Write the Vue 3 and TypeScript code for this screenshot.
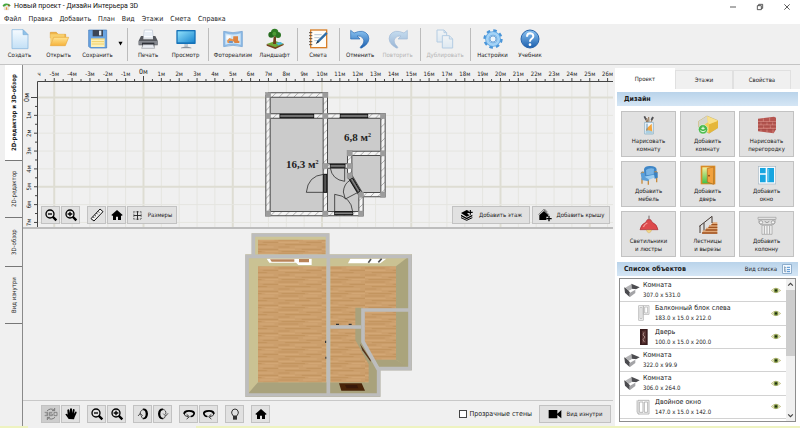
<script setup lang="ts">
import { ref } from 'vue'

interface Tool {
  kind: 'button' | 'separator' | 'arrow'
  label?: string
  icon?: string
  size?: 'small' | 'medium' | 'large'
  disabled?: boolean
}

interface SceneItem {
  name: string
  dims: string
  icon: string
  child?: boolean
}

const menu = ['Файл', 'Правка', 'Добавить', 'План', 'Вид', 'Этажи', 'Смета', 'Справка']

const sep: Tool = { kind: 'separator' }
const tools: Tool[] = [
  { kind: 'button', label: 'Создать', icon: 'new', size: 'medium' },
  { kind: 'button', label: 'Открыть', icon: 'open', size: 'medium' },
  { kind: 'button', label: 'Сохранить', icon: 'save', size: 'medium' },
  { kind: 'arrow' },
  sep,
  { kind: 'button', label: 'Печать', icon: 'print', size: 'small' },
  { kind: 'button', label: 'Просмотр', icon: 'monitor', size: 'medium' },
  sep,
  { kind: 'button', label: 'Фотореализм', icon: 'photo', size: 'large' },
  { kind: 'button', label: 'Ландшафт', icon: 'tree', size: 'medium' },
  sep,
  { kind: 'button', label: 'Смета', icon: 'estimate', size: 'small' },
  sep,
  { kind: 'button', label: 'Отменить', icon: 'undo', size: 'small' },
  { kind: 'button', label: 'Повторить', icon: 'redo', size: 'medium', disabled: true },
  sep,
  { kind: 'button', label: 'Дублировать', icon: 'copy', size: 'large', disabled: true },
  sep,
  { kind: 'button', label: 'Настройки', icon: 'gear', size: 'medium' },
  { kind: 'button', label: 'Учебник', icon: 'help', size: 'small' },
]

const views = [
  { label: '2D-редактор и 3D-обзор', size: 'view-xl' },
  { label: '2D-редактор', size: 'view-l' },
  { label: '3D-обзор', size: 'view-m' },
  { label: 'Вид изнутри', size: 'view-l' },
]
const activeView = ref(0)

const panelTabs = ['Проект', 'Этажи', 'Свойства']
const activePanel = ref(0)

const designActions = [
  { icon: 'draw-room', lines: ['Нарисовать', 'комнату'] },
  { icon: 'add-room', lines: ['Добавить', 'комнату'] },
  { icon: 'bricks', lines: ['Нарисовать', 'перегородку'] },
  { icon: 'chair', lines: ['Добавить', 'мебель'] },
  { icon: 'door', lines: ['Добавить', 'дверь'] },
  { icon: 'window', lines: ['Добавить', 'окно'] },
  { icon: 'lamp', lines: ['Светильники', 'и люстры'] },
  { icon: 'stairs', lines: ['Лестницы', 'и вырезы'] },
  { icon: 'column', lines: ['Добавить', 'колонну'] },
]

const items: SceneItem[] = [
  { name: 'Комната', dims: '307.0 x 531.0', icon: 'room' },
  { name: 'Балконный блок слева', dims: '183.0 x 15.0 x 212.0', icon: 'balcony', child: true },
  { name: 'Дверь', dims: '100.0 x 15.0 x 200.0', icon: 'dark-door', child: true },
  { name: 'Комната', dims: '322.0 x 99.9', icon: 'room' },
  { name: 'Комната', dims: '306.0 x 264.0', icon: 'room' },
  { name: 'Двойное окно', dims: '147.0 x 15.0 x 142.0', icon: 'double-window', child: true },
]

const cameraGroups = [
  [
    { icon: 'rotate360', label: 'Вращение 360' },
    { icon: 'hand', label: 'Переместить' },
  ],
  [
    { icon: 'zoom-out', label: 'Отдалить' },
    { icon: 'zoom-in', label: 'Приблизить' },
  ],
  [
    { icon: 'tilt-up', label: 'Наклон вверх' },
    { icon: 'tilt-down', label: 'Наклон вниз' },
  ],
  [
    { icon: 'turn-left', label: 'Поворот влево' },
    { icon: 'turn-right', label: 'Поворот вправо' },
  ],
  [{ icon: 'bulb', label: 'Освещение' }],
  [{ icon: 'home', label: 'Исходный вид' }],
]

const transparentWalls = ref(false)

/* Ruler geometry: one metre and the position of the zero mark on the canvas. */
const metre = 17.85
const zeroX = 120.5
const zeroY = 32.5
const axisX = 14.5
const axisY = 16.5
const xMarks = Array.from({ length: 32 }, (_, i) => i - 5).map((n) => ({ n, x: zeroX + n * metre }))
const yMarks = Array.from({ length: 8 }, (_, i) => i).map((n) => ({ n, y: zeroY + n * metre }))
</script>

<template>
  <div class="app">
    <svg class="sprite" aria-hidden="true">
      <defs>
        <linearGradient id="gBlue" x1="0" y1="0" x2="0" y2="1">
          <stop offset="0" stop-color="#8cc4f2" /><stop offset="1" stop-color="#1b5fae" />
        </linearGradient>
        <linearGradient id="gScreen" x1="0" y1="0" x2="1" y2="1">
          <stop offset="0" stop-color="#8fe0fb" /><stop offset="1" stop-color="#1b87cf" />
        </linearGradient>
        <linearGradient id="gPaper" x1="0" y1="0" x2="0" y2="1">
          <stop offset="0" stop-color="#f6fbff" /><stop offset="1" stop-color="#c3e0f6" />
        </linearGradient>
        <linearGradient id="gFolder" x1="0" y1="0" x2="0" y2="1">
          <stop offset="0" stop-color="#ffe391" /><stop offset="1" stop-color="#f6b33c" />
        </linearGradient>
        <linearGradient id="gDoor" x1="0" y1="0" x2="0" y2="1">
          <stop offset="0" stop-color="#f7ef9c" /><stop offset="1" stop-color="#3fc24a" />
        </linearGradient>
        <pattern id="hatch" width="22" height="22" patternUnits="userSpaceOnUse">
          <rect width="22" height="22" fill="#f4f4f4" />
          <path d="M-2 24L24 -2" stroke="#9a9a9a" stroke-width="2.4" />
        </pattern>
        <pattern id="wood" width="130" height="42" patternUnits="userSpaceOnUse">
          <rect width="130" height="42" fill="#cc9f6c" />
          <path d="M0 3H60M84 10H130M20 17H96M0 24H34M70 31H130M10 38H80" stroke="#bb8b56" stroke-width="2" />
          <path d="M74 3H118M0 10H62M50 24H116M0 31H50M90 38H130" stroke="#d8ad7c" stroke-width="2" />
        </pattern>
      </defs>

      <symbol id="i-new" viewBox="0 0 66 66">
        <path d="M9 5H42L57 20V62H9Z" fill="url(#gPaper)" stroke="#8fbbe0" stroke-width="2.5" />
        <path d="M42 5V20H57Z" fill="#8fc2ea" stroke="#7fb0da" stroke-width="2" />
      </symbol>
      <symbol id="i-open" viewBox="0 0 66 66">
        <path d="M7 13H25L30 19H53V30H7Z" fill="#f0b64a" stroke="#dc9a30" stroke-width="2" />
        <path d="M7 52V19H49V30H16Z" fill="#f8cf6d" />
        <path d="M7 53L17 28H62L52 53Z" fill="url(#gFolder)" stroke="#e8a73a" stroke-width="2" />
      </symbol>
      <symbol id="i-save" viewBox="0 0 66 66">
        <path d="M5 6H59V60H10L5 55Z" fill="#6aa5e2" stroke="#3f78bd" stroke-width="2" />
        <rect x="17" y="6" width="31" height="19" fill="#3c4654" />
        <rect x="36" y="8" width="7" height="14" fill="#dfe9f2" />
        <rect x="12" y="32" width="41" height="25" fill="#fdf0b9" />
        <path d="M12 33H53M14 41H51M14 48H51" stroke="#f0cf66" stroke-width="3" />
      </symbol>
      <symbol id="i-print" viewBox="0 0 66 66">
        <path d="M19 30L22 6H46L49 30Z" fill="#fafcff" stroke="#b9c3d0" stroke-width="2" />
        <path d="M23 15H46M22 21H47" stroke="#c4d2e4" stroke-width="2" />
        <path d="M12 24H19V34H48V24H55L62 38V52H5V38Z" fill="#55585e" />
        <path d="M5 39H62V50H5Z" fill="#85888f" />
        <path d="M15 44H52V58H15Z" fill="#2f3238" />
        <path d="M18 50H49L53 61H14Z" fill="#e9ecf2" stroke="#9a9da3" stroke-width="2" />
      </symbol>
      <symbol id="i-monitor" viewBox="0 0 66 66">
        <rect x="4" y="6" width="58" height="42" rx="2" fill="#1572b8" />
        <rect x="8" y="10" width="50" height="33" fill="url(#gScreen)" />
        <path d="M28 48H39V56H28Z" fill="#bfc9d2" />
        <path d="M18 60Q33 52 49 60Z" fill="#8f99a3" stroke="#7f8993" />
      </symbol>
      <symbol id="i-photo" viewBox="0 0 66 66">
        <path d="M5 10Q33 18 61 10V56Q33 48 5 56Z" fill="#8ebbe6" stroke="#6d9fd2" stroke-width="2" />
        <path d="M10 16Q33 23 56 16V50Q33 43 10 50Z" fill="#cfe6f8" />
        <rect x="13" y="22" width="13" height="13" fill="#f6fbff" />
        <path d="M15 38L22 30L33 34L32 45H17Z" fill="#e8944e" />
        <path d="M34 25H48V38H52V45H38L33 38Z" fill="#dd8340" />
        <path d="M20 39H32V45H22Z" fill="#6b93c4" />
      </symbol>
      <symbol id="i-tree" viewBox="0 0 66 66">
        <path d="M8 48L34 39L59 47L34 61Z" fill="#6fa836" />
        <path d="M8 48L34 58L59 47V51L34 63L8 53Z" fill="#74421c" />
        <path d="M36 45L50 42L57 47L43 52Z" fill="#4ab7dc" />
        <path d="M29 25H36V48H27Z" fill="#6f3f1a" />
        <circle cx="32" cy="13" r="11" fill="#2f7d25" /><circle cx="22" cy="20" r="9" fill="#256b1e" />
        <circle cx="42" cy="21" r="9" fill="#2c7424" /><circle cx="31" cy="17" r="6" fill="#4c9b35" />
      </symbol>
      <symbol id="i-estimate" viewBox="0 0 66 66">
        <rect x="11" y="6" width="48" height="53" fill="#fffdf8" stroke="#d97f28" stroke-width="4" />
        <path d="M6 14H16M6 23H16M6 32H16M6 41H16M6 50H16" stroke="#5f554b" stroke-width="3" />
        <path d="M22 20H44M22 29H38M22 38H32" stroke="#a6b7cb" stroke-width="2.4" />
        <path d="M28 46L32 37L57 12L62 17L37 42Z" fill="#2f6ea8" /><path d="M26 49L32 38L37 42Z" fill="#24384c" />
      </symbol>
      <symbol id="i-undo" viewBox="0 0 66 66">
        <path d="M5 7L15 15Q44 2 57 21Q67 44 38 60Q30 61 36 55Q49 42 42 31Q36 22 24 24L33 33H5Z" fill="url(#gBlue)" stroke="#2a69b2" stroke-width="2" />
      </symbol>
      <symbol id="i-redo" viewBox="0 0 66 66">
        <path d="M61 7L51 15Q22 2 9 21Q-1 44 28 60Q36 61 30 55Q17 42 24 31Q30 22 42 24L33 33H61Z" fill="url(#gBlue)" stroke="#2a69b2" stroke-width="2" />
      </symbol>
      <symbol id="i-copy" viewBox="0 0 66 66">
        <path d="M9 6H30L38 14V42H9Z" fill="url(#gPaper)" stroke="#5e9ad2" stroke-width="3" />
        <path d="M25 23H46L56 33V60H25Z" fill="url(#gPaper)" stroke="#5e9ad2" stroke-width="3" />
        <path d="M30 6V14H38M46 23V33H56" fill="none" stroke="#5e9ad2" stroke-width="3" />
      </symbol>
      <symbol id="i-gear" viewBox="0 0 66 66">
        <circle cx="33" cy="33" r="24" fill="none" stroke="#4a95d8" stroke-width="10" stroke-dasharray="10 8.85" />
        <circle cx="33" cy="33" r="17" fill="none" stroke="#5ba4e2" stroke-width="13" />
        <circle cx="33" cy="33" r="17" fill="none" stroke="#a5d3f6" stroke-width="8" />
        <circle cx="33" cy="33" r="9" fill="#eef5fb" stroke="#3f86ca" stroke-width="2" />
      </symbol>
      <symbol id="i-help" viewBox="0 0 66 66">
        <circle cx="33" cy="33" r="27" fill="url(#gBlue)" stroke="#2a65ab" stroke-width="3" />
        <path d="M24 26Q24 16 34 16Q43 17 43 25Q43 30 37 33Q33 36 33 41" fill="none" stroke="#fff" stroke-width="6" />
        <circle cx="33" cy="50" r="4" fill="#fff" />
      </symbol>

      <symbol id="i-draw-room" viewBox="0 0 60 60">
        <path d="M24 24L17 4M30 24L29 6M34 24L43 8M27 24L23 9" stroke="#8b6a4a" stroke-width="3" />
        <path d="M16 4L21 14M42 6L37 15" stroke="#4f5258" stroke-width="5" />
        <path d="M17 22H43V57H17Z" fill="#eef6fb" stroke="#8fb3c9" stroke-width="2.5" />
        <path d="M21 42L38 26L40 55H21Z" fill="#f3a53c" /><path d="M24 26V50" stroke="#5f8fb4" stroke-width="3" />
        <path d="M20 48Q30 42 41 50V56H20Z" fill="#a9cfe3" />
      </symbol>
      <symbol id="i-add-room" viewBox="0 0 60 60">
        <path d="M2 19L27 3L60 17V38L33 55L2 36Z" fill="#f2cf59" stroke="#b49a46" stroke-width="1.5" />
        <path d="M2 19L27 3L30 22L12 34L2 36Z" fill="#d6d4cc" />
        <path d="M33 28L60 17V38L33 55Z" fill="#e5b73a" /><path d="M27 3L60 17L33 28L30 22Z" fill="#f8e08b" />
        <circle cx="15" cy="43" r="14" fill="#49b84b" stroke="#fff" stroke-width="1.5" />
        <path d="M15 35V44M10 40H20M7 47Q15 54 23 47" fill="none" stroke="#e7ffe4" stroke-width="3" />
      </symbol>
      <symbol id="i-bricks" viewBox="0 0 60 60">
        <path d="M3 11L51 5L57 8V43L50 55L3 49Z" fill="#b55550" />
        <path d="M3 20H57M3 30H57M3 40H57M19 10V20M38 8V20M12 20V30M30 20V30M47 20V30M20 30V40M40 30V40M12 40V50M30 40V52M48 40V54" stroke="#dc968d" stroke-width="2" />
        <path d="M3 23H56M3 33H56M3 44H54" stroke="#96403e" stroke-width="1.5" />
      </symbol>
      <symbol id="i-chair" viewBox="0 0 60 60">
        <path d="M9 40V56M28 42V59M53 34V52" stroke="#c78a3d" stroke-width="4" />
        <path d="M15 12Q18 2 34 3Q52 3 53 14L50 34L16 38Z" fill="#3f86c6" />
        <path d="M21 15Q30 8 45 11L44 28L22 31Z" fill="#79b4e4" />
        <path d="M14 35L44 29L53 35L28 45Z" fill="#9acdf2" />
        <path d="M5 24Q8 17 15 21L18 36L29 43V49L8 45Z" fill="#5b9fd8" /><path d="M45 20Q53 17 56 22V38L47 41Z" fill="#3b82c1" />
        <path d="M6 25Q9 19 15 22M46 21Q52 18 55 22" fill="none" stroke="#c78a3d" stroke-width="3" />
      </symbol>
      <symbol id="i-door" viewBox="0 0 60 60">
        <path d="M8 2H52V58H8Z" fill="#d98b25" /><path d="M13 7H47V55H13Z" fill="url(#gDoor)" />
        <path d="M28 10L47 6V58L28 51Z" fill="#f2a23e" stroke="#b3681d" stroke-width="2" />
        <circle cx="33" cy="32" r="2.5" fill="#7a4414" />
      </symbol>
      <symbol id="i-window" viewBox="0 0 60 60">
        <rect x="4" y="4" width="52" height="53" fill="#f6fbff" stroke="#a9b7c2" stroke-width="2" />
        <path d="M9 9H26V25H9ZM9 29H26V52H9ZM31 9H51V52H31Z" fill="#16a5e0" />
        <path d="M35 12V49" stroke="#8ad8f4" stroke-width="2" />
      </symbol>
      <symbol id="i-lamp" viewBox="0 0 60 60">
        <path d="M30 2V22" stroke="#5b4a4a" stroke-width="2.5" />
        <path d="M25 14H35L40 22Q54 28 57 44H3Q6 28 20 22Z" fill="#dd4a4c" stroke="#a82f35" stroke-width="2" />
        <path d="M13 36Q17 27 25 24" fill="none" stroke="#f49a96" stroke-width="4" />
        <path d="M22 45H38Q36 53 30 54Q24 53 22 45Z" fill="#f3d78a" stroke="#c19a52" />
      </symbol>
      <symbol id="i-stairs" viewBox="0 0 60 60">
        <path d="M14 56V46H24V38H33V30H42V22H58V56Z" fill="#e0a878" />
        <path d="M12 54H58M22 45H58M31 37H58M40 29H58" stroke="#a0521f" stroke-width="4" />
        <path d="M4 34L42 4M6 32V54M18 24V46M42 4V24" stroke="#453a35" stroke-width="3" fill="none" />
      </symbol>
      <symbol id="i-column" viewBox="0 0 60 60">
        <path d="M3 7H57V13H3Z" fill="#ececec" stroke="#9a9a9a" stroke-width="2" />
        <path d="M6 14H54Q57 26 47 29H13Q3 26 6 14Z" fill="#dedede" stroke="#999" stroke-width="2" />
        <circle cx="12" cy="22" r="5" fill="#f5f5f5" stroke="#888" stroke-width="2" /><circle cx="48" cy="22" r="5" fill="#f5f5f5" stroke="#888" stroke-width="2" />
        <path d="M23 19Q30 27 37 19" fill="none" stroke="#888" stroke-width="2.5" />
        <path d="M15 31H45V58H15Z" fill="#f3f3f3" stroke="#999" stroke-width="2" /><path d="M22 32V57M30 32V57M38 32V57" stroke="#aaa" stroke-width="3" />
      </symbol>

      <symbol id="i-room" viewBox="0 0 48 48">
        <path d="M1 19L22 7L25 21L12 28Z" fill="#b4b4b6" /><path d="M22 5L47 16L36 22L24 20Z" fill="#4c4c50" />
        <path d="M11 29L25 21L36 23L18 34Z" fill="#fff" />
        <path d="M1 17L17 31V45L3 32Z" fill="#4b4b4f" /><path d="M17 33L34 23V33L18 45Z" fill="#a4a4a7" />
        <path d="M1 17L17 31" fill="none" stroke="#333" stroke-width="2" />
      </symbol>
      <symbol id="i-balcony" viewBox="0 0 48 48">
        <path d="M8 2H22V46H8ZM22 2H39V28H22ZM12 7H18V41H12ZM26 6H35V24H26Z" fill="#fff" stroke="#b5b5b5" stroke-width="2.5" />
      </symbol>
      <symbol id="i-dark-door" viewBox="0 0 48 48">
        <path d="M12 0H35V48H12Z" fill="#3a1c1d" /><path d="M18 6L30 4V43L18 44Z" fill="#5a3433" />
        <path d="M24 10L21 18L27 24L21 32L25 39" fill="none" stroke="#b69a94" stroke-width="2.5" />
      </symbol>
      <symbol id="i-double-window" viewBox="0 0 48 48">
        <path d="M6 4H39V45H6ZM10 9H21V40H10ZM25 9H35V40H25Z" fill="#fff" stroke="#aaa" stroke-width="2.5" /><path d="M3 4V40L10 46" fill="none" stroke="#bbb" stroke-width="2.5" />
      </symbol>
      <symbol id="i-eye" viewBox="0 0 30 20">
        <path d="M1 10Q14 -4 29 10Q14 23 1 10Z" fill="#eef0cf" stroke="#b3ad6e" stroke-width="2" />
        <circle cx="15" cy="10" r="7" fill="#7c9440" /><circle cx="15" cy="10" r="3.4" fill="#1f2d16" />
      </symbol>

      <symbol id="i-zoom-out" viewBox="0 0 42 42">
        <circle cx="18" cy="18" r="12" fill="none" stroke="#000" stroke-width="4" /><path d="M12 18H24" stroke="#000" stroke-width="4" />
        <path d="M26 26L37 37" stroke="#000" stroke-width="7" />
      </symbol>
      <symbol id="i-zoom-in" viewBox="0 0 42 42">
        <circle cx="18" cy="18" r="12" fill="none" stroke="#000" stroke-width="4" /><path d="M11 18H25M18 11V25" stroke="#000" stroke-width="4" />
        <path d="M26 26L37 37" stroke="#000" stroke-width="7" />
      </symbol>
      <symbol id="i-ruler" viewBox="0 0 42 42">
        <path d="M3 32L30 3L39 11L12 39Z" fill="#f4f4f4" stroke="#111" stroke-width="3" />
        <path d="M9 26L13 30M14 21L18 25M19 15L23 19M24 10L28 14" stroke="#111" stroke-width="2.5" />
      </symbol>
      <symbol id="i-home" viewBox="0 0 42 42">
        <path d="M21 6L38 21L35 24L33 22V36H24V26H18V36H9V22L7 24L4 21Z" fill="#000" />
      </symbol>
      <symbol id="i-sizes" viewBox="0 0 42 42">
        <path d="M6 7H36M6 35H36M7 6V36M35 6V36" stroke="#333" stroke-width="3" stroke-dasharray="4 4" />
        <path d="M21 4V38M6 21H36" stroke="#222" stroke-width="3.5" />
      </symbol>
      <symbol id="i-floor" viewBox="0 0 42 42">
        <path d="M3 15L20 6L27 9L22 17L29 22L20 26Z" fill="#000" />
        <path d="M3 20L20 29L37 20V25L20 34L3 25Z" fill="#000" />
        <path d="M3 29L20 37L37 29" fill="none" stroke="#000" stroke-width="3" />
        <path d="M31 6V20M24 13H38" stroke="#000" stroke-width="3.5" />
      </symbol>
      <symbol id="i-roof" viewBox="0 0 42 42">
        <path d="M4 36V21L18 9L31 21V26H25V36Z" fill="#000" />
        <path d="M2 19L17 5L35 22M20 4L28 12" fill="none" stroke="#222" stroke-width="2.5" stroke-dasharray="3 1.5" />
        <path d="M33 24V40M25 32H41" stroke="#000" stroke-width="4" />
      </symbol>
      <symbol id="i-rotate360" viewBox="0 0 42 42">
        <path d="M9 12Q20 1 31 10M32 3V11H24M33 31Q22 41 11 32M10 39V31H18" fill="none" stroke="#777" stroke-width="3" />
        <path d="M2 16H11V26H2M5 21H11M25 16H16V26H25V21H16M30 16H39V26H30Z" fill="none" stroke="#777" stroke-width="2.5" />
      </symbol>
      <symbol id="i-hand" viewBox="0 0 42 42">
        <path d="M14 36L4 22Q7 18 11 23L10 9Q14 5 16 9L18 18V5Q21 2 24 5V18L27 7Q31 5 32 9L30 20L34 14Q38 13 38 17L32 30L30 37Z" fill="#000" />
      </symbol>
      <symbol id="i-tilt-up" viewBox="0 0 42 42">
        <path d="M20 5Q34 3 36 20Q35 38 20 37L22 32Q29 31 29 20Q28 10 22 10Z" fill="#000" />
        <path d="M22 7Q10 12 13 25M22 35Q15 32 16 26M6 27L13 19L20 27" fill="none" stroke="#333" stroke-width="2.5" />
      </symbol>
      <symbol id="i-tilt-down" viewBox="0 0 42 42">
        <path d="M22 5Q8 3 6 20Q7 38 22 37L20 32Q13 31 13 20Q14 10 20 10Z" fill="#000" />
        <path d="M20 7Q32 9 29 22M20 35Q27 34 28 27M22 20L29 27L36 19" fill="none" stroke="#333" stroke-width="2.5" />
      </symbol>
      <symbol id="i-turn-left" viewBox="0 0 42 42">
        <path d="M4 21Q3 9 21 9Q41 10 39 20Q37 29 26 31L25 27Q34 25 34 19Q31 14 21 14Q10 14 9 22Z" fill="#000" />
        <path d="M6 20Q7 28 19 29M14 22L22 29L14 36" fill="none" stroke="#333" stroke-width="3" />
      </symbol>
      <symbol id="i-turn-right" viewBox="0 0 42 42">
        <path d="M38 21Q39 9 21 9Q1 10 3 20Q5 29 16 31L17 27Q8 25 8 19Q11 14 21 14Q32 14 33 22Z" fill="#000" />
        <path d="M36 20Q35 28 23 29M28 22L20 29L28 36" fill="none" stroke="#333" stroke-width="3" />
      </symbol>
      <symbol id="i-bulb" viewBox="0 0 42 42">
        <path d="M16 27Q10 20 11 15Q13 6 21 6Q29 6 31 15Q32 20 26 27Z" fill="none" stroke="#333" stroke-width="3" />
        <path d="M15 27H27V38H15Z" fill="#333" />
      </symbol>
      <symbol id="i-camera" viewBox="0 0 42 42">
        <path d="M2 9H28V34H2ZM28 20L40 9V34L28 24Z" fill="#000" />
      </symbol>
      <symbol id="i-list" viewBox="0 0 30 30">
        <rect x="2" y="2" width="26" height="26" fill="#f2f9ff" stroke="#6e94ba" stroke-width="2" />
        <path d="M8 7V23M8 11H13M8 18H13M8 23H13" stroke="#55789c" stroke-width="2" fill="none" /><path d="M15 10H24M15 17H24M15 23H24" stroke="#4c8ed0" stroke-width="3" />
      </symbol>
    </svg>

    <header class="titlebar">
      <svg class="logo" viewBox="0 0 36 30" aria-hidden="true">
        <path d="M9 13H27V28H9Z" fill="#f7f4ea" stroke="#a88" />
        <path d="M2 12Q8 1 18 3Q31 3 35 12L29 15L20 9L6 16Z" fill="#45a73f" />
        <path d="M24 8H29V16L24 12Z" fill="#b5482e" /><path d="M15 18H21V28H15Z" fill="#e39a41" />
      </svg>
      <h1 class="title">Новый проект - Дизайн Интерьера 3D</h1>
      <div class="window-controls">
        <button type="button" aria-label="Свернуть"><svg viewBox="0 0 24 24"><path d="M3 12H21" /></svg></button>
        <button type="button" aria-label="Восстановить"><svg viewBox="0 0 24 24"><path d="M4 8H16V20H4ZM8 8V4H20V16H16" /></svg></button>
        <button type="button" aria-label="Закрыть"><svg viewBox="0 0 24 24"><path d="M4 4L20 20M20 4L4 20" /></svg></button>
      </div>
    </header>

    <nav class="menubar">
      <button v-for="m in menu" :key="m" type="button">{{ m }}</button>
    </nav>

    <div class="toolbar">
      <template v-for="(t, i) in tools" :key="i">
        <button v-if="t.kind === 'button'" type="button" class="tool" :class="t.size" :disabled="t.disabled">
          <svg aria-hidden="true"><use :href="'#i-' + t.icon" /></svg>
          <span>{{ t.label }}</span>
        </button>
        <button v-else-if="t.kind === 'arrow'" type="button" class="tool-arrow" aria-label="Варианты сохранения">
          <svg viewBox="0 0 12 12"><path d="M1 2H11L6 11Z" /></svg>
        </button>
        <i v-else class="tool-sep"></i>
      </template>
    </div>

    <main class="workspace">
      <div class="view-tabs">
        <button
          v-for="(v, i) in views"
          :key="v.label"
          type="button"
          :class="[v.size, { active: i === activeView }]"
          @click="activeView = i"
        >
          {{ v.label }}
        </button>
      </div>

      <div class="editor">
        <section class="plan">
          <svg class="canvas" aria-label="План этажа">
            <g class="grid">
              <line v-for="m in xMarks" :key="'gx' + m.n" :x1="m.x" :x2="m.x" y1="17" y2="1000" :class="{ major: m.n % 5 === 0 }" />
              <line v-for="m in yMarks" :key="'gy' + m.n" x1="15" x2="2000" :y1="m.y" :y2="m.y" :class="{ major: m.n % 5 === 0 }" />
            </g>
            <g class="axis">
              <line :x1="axisX" x2="2000" :y1="axisY" :y2="axisY" />
              <line :x1="axisX" :x2="axisX" :y1="axisY" y2="1000" />
              <template v-for="m in xMarks" :key="'tx' + m.n">
                <line :x1="m.x" :x2="m.x" :y1="m.n === 0 ? 11 : 13" y2="17" />
                <line :x1="m.x - metre / 2" :x2="m.x - metre / 2" y1="14" y2="16" />
              </template>
              <template v-for="m in yMarks" :key="'ty' + m.n">
                <line :x1="m.n === 0 ? 8 : 11" x2="15" :y1="m.y" :y2="m.y" />
                <line x1="12" x2="14" :y1="m.y + metre / 2" :y2="m.y + metre / 2" />
              </template>
            </g>
            <g class="ticks">
              <text x="16" y="11">ч</text>
              <text v-for="m in xMarks" :key="'lx' + m.n" :x="m.x" :y="m.n === 0 ? 9 : 11" :class="{ zero: m.n === 0 }">{{ m.n }}м</text>
              <text
                v-for="m in yMarks"
                :key="'ly' + m.n"
                :transform="'translate(' + (m.n === 0 ? 6 : 8) + ' ' + m.y + ') rotate(-90)'"
                :class="{ zero: m.n === 0 }"
              >{{ m.n }}м</text>
            </g>

            <svg x="217" y="20" width="170" height="140" viewBox="0 0 510 420">
              <path d="M84 30H256V93H429V329H363V386H84Z" fill="#cbcbcb" />
              <g fill="none" stroke-linejoin="miter">
                <path class="wall-edge" d="M84 30H256V386M84 93H429V329H363M84 30V386H363V329L329 272V205H429M256 243H329" />
                <path class="wall-fill" d="M84 30H256V386M84 93H429V329H363M84 30V386H363V329L329 272V205H429M256 243H329" />
              </g>
              <g fill="#9c9c9c" stroke="#888">
                <rect v-for="(p, i) in [[84,30],[256,30],[84,93],[256,93],[429,93],[329,205],[429,205],[256,243],[329,243],[329,272],[363,329],[429,329],[84,386],[256,386],[363,386]]" :key="i" :x="p[0] - 8" :y="p[1] - 8" width="16" height="16" />
              </g>
              <g fill="#555" stroke="#111" stroke-width="3">
                <rect x="120" y="88" width="101" height="10" /><rect x="301" y="88" width="82" height="10" />
                <rect x="271" y="238" width="44" height="9" /><rect x="251" y="268" width="9" height="54" />
                <rect x="284" y="380" width="54" height="9" /><path d="M329 284L338 279L361 318L353 323Z" />
              </g>
              <path d="M120 93H221M301 93H383M271 243H315M284 385H338M334 281L357 320" stroke="#aaa" stroke-width="2" />
              <path d="M251 322H199Q204 272 251 268M314 247V289Q276 284 271 249M284 380V328Q334 334 338 380M330 286Q312 296 310 321L316 342L354 322" fill="none" stroke="#333" stroke-width="2.5" />
            </svg>
            <text class="area" x="263" y="103">16,3 м<tspan class="sup" dy="-4">2</tspan></text>
            <text class="area" x="321" y="76">6,8 м<tspan class="sup" dy="-4">2</tspan></text>
          </svg>

          <div class="plan-tools">
            <div class="group">
              <button type="button" class="btn icon" aria-label="Отдалить"><svg><use href="#i-zoom-out" /></svg></button>
              <button type="button" class="btn icon" aria-label="Приблизить"><svg><use href="#i-zoom-in" /></svg></button>
            </div>
            <div class="group">
              <button type="button" class="btn icon" aria-label="Линейка"><svg><use href="#i-ruler" /></svg></button>
              <button type="button" class="btn icon" aria-label="Исходный вид"><svg><use href="#i-home" /></svg></button>
              <button type="button" class="btn sizes"><svg><use href="#i-sizes" /></svg>Размеры</button>
            </div>
            <div class="group end">
              <button type="button" class="btn wide"><svg><use href="#i-floor" /></svg>Добавить этаж</button>
              <button type="button" class="btn wide"><svg><use href="#i-roof" /></svg>Добавить крышу</button>
            </div>
          </div>
        </section>

        <section class="scene">
          <svg class="canvas" aria-label="3D-обзор">
            <svg x="212" y="-4" width="190" height="175" viewBox="0 0 570 525">
              <path d="M50 25H283V95H50Z" fill="#cdc595" /><path d="M69 44H272V90H69Z" fill="url(#wood)" />
              <path d="M31 88H530V436H436V515H31Z" fill="#cac293" />
              <path d="M31 515L69 472H401L436 432H530V515Z" fill="#a9a27c" />
              <path d="M483 124L530 88V436L483 404Z" fill="#aaa47c" />
              <path d="M69 124H274V472H69Z" fill="url(#wood)" />
              <path d="M286 124H483V404H420L401 472H286Z" fill="url(#wood)" />
              <path d="M361 248H384V345L430 432V500L401 472V418L361 345Z" fill="#a9a27c" />
              <path d="M390 262H483V404H418L390 350Z" fill="url(#wood)" />
              <path d="M418 404H483L525 430H434Z" fill="#a9a27c" />
              <path d="M436 436H540V520H436Z" fill="#f0f0f0" />
              <path d="M95 101H230V120H190L183 113H103Z" fill="#fff" /><path d="M105 103H178V110H110ZM192 102H222V112H192Z" fill="#b98459" />
              <path d="M346 101H454L436 115H339Z" fill="#fff" /><path d="M408 102L400 113M440 101L430 112" stroke="#555" stroke-width="5" />
              <path d="M375 356L407 404V410L382 376Z" fill="#54301b" />
              <path d="M312 475H380L390 497H319Z" fill="#4a2509" /><path d="M330 480H366L370 490H335Z" fill="#38190a" />
              <path d="M303 298H312M341 298H350M272 347V354M273 395V401" stroke="#333" stroke-width="4" />
              <g fill="none" stroke="#bdbdbd" stroke-width="11">
                <path d="M55 94V30H278V94" />
                <path d="M36 94H525V431H431V510H36ZM280 94V510M286 306H378M525 255H384V350L431 435" />
              </g>
            </svg>
          </svg>
        </section>

        <div class="scene-tools">
          <div v-for="(g, i) in cameraGroups" :key="i" class="group">
            <button v-for="b in g" :key="b.icon" type="button" class="btn icon" :class="{ off: b.icon === 'rotate360' }" :aria-label="b.label">
              <svg><use :href="'#i-' + b.icon" /></svg>
            </button>
          </div>
          <div class="end">
            <label class="check"><input v-model="transparentWalls" type="checkbox" />Прозрачные стены</label>
            <button type="button" class="btn inside"><svg><use href="#i-camera" /></svg>Вид изнутри</button>
          </div>
        </div>
      </div>

      <aside class="side">
        <div class="side-tabs">
          <button v-for="(t, i) in panelTabs" :key="t" type="button" :class="{ active: i === activePanel }" @click="activePanel = i">{{ t }}</button>
        </div>
        <div class="panel">
          <h2 class="head">Дизайн</h2>
          <div class="actions">
            <button v-for="a in designActions" :key="a.icon" type="button">
              <svg aria-hidden="true"><use :href="'#i-' + a.icon" /></svg>
              <span>{{ a.lines[0] }}<br />{{ a.lines[1] }}</span>
            </button>
          </div>
          <h2 class="head">
            Список объектов
            <button type="button" class="list-mode">Вид списка <svg><use href="#i-list" /></svg></button>
          </h2>
          <div class="objects">
            <ul>
              <li v-for="(o, i) in items" :key="i" :class="{ child: o.child }">
                <svg class="thumb" aria-hidden="true"><use :href="'#i-' + o.icon" /></svg>
                <div class="info">
                  <strong>{{ o.name }}</strong>
                  <span>{{ o.dims }}</span>
                </div>
                <button type="button" class="eye" aria-label="Показать или скрыть"><svg><use href="#i-eye" /></svg></button>
              </li>
            </ul>
            <div class="scrollbar" aria-hidden="true">
              <svg viewBox="0 0 12 12"><path d="M2 8L6 4L10 8" /></svg>
              <div class="track"><div class="thumb-bar"></div></div>
              <svg viewBox="0 0 12 12"><path d="M2 4L6 8L10 4" /></svg>
            </div>
          </div>
        </div>
      </aside>
    </main>
    <footer class="desktop-edge"></footer>
  </div>
</template>

<style>
body {
  margin: 0;
  overflow: hidden;
}
</style>

<style scoped>
.app {
  display: flex;
  flex-direction: column;
  height: 100vh;
  background: #f0f0f0;
  color: #1a1a1a;
  font: 6px/8px "DejaVu Sans Condensed", "DejaVu Sans", sans-serif;
}
.sprite {
  position: absolute;
  width: 0;
  height: 0;
}
button {
  box-sizing: border-box;
  margin: 0;
  padding: 0;
  border: 0;
  background: none;
  color: inherit;
  font: inherit;
  white-space: nowrap;
}

.titlebar {
  display: flex;
  align-items: center;
  height: 13px;
  padding-left: 2px;
  background: #fff;
}
.logo {
  width: 9px;
  height: 9px;
}
.title {
  margin: 0 0 0 3px;
  font: 7px/13px Roboto, "Liberation Sans", sans-serif;
  color: #111;
}
.window-controls {
  display: flex;
  margin-left: auto;
}
.window-controls button {
  display: grid;
  place-items: center;
  width: 27px;
  height: 13px;
}
.window-controls svg {
  width: 8px;
  height: 8px;
  fill: none;
  stroke: #333;
  stroke-width: 2.4;
}

.menubar {
  display: flex;
  gap: 7px;
  height: 11px;
  padding-left: 4px;
  background: #fff;
  font-size: 7px;
}

.toolbar {
  display: flex;
  height: 40px;
  border-bottom: 1px solid #c4c4c4;
}
.tool {
  display: flex;
  flex-direction: column;
  align-items: center;
  gap: 1px;
  padding-top: 4px;
}
.tool svg {
  width: 22px;
  height: 22px;
}
.small {
  width: 36px;
}
.medium {
  width: 39px;
}
.large {
  width: 44px;
}
.tool:disabled {
  color: #b4b4b4;
}
.tool:disabled svg {
  opacity: 0.4;
}
.tool-arrow {
  width: 7px;
}
.tool-arrow svg {
  width: 5px;
  height: 5px;
}
.tool-sep {
  width: 1px;
  margin: 4px 2px 3px 3px;
  background: #bcbcbc;
}

.workspace {
  display: flex;
  flex: 1;
  min-height: 0;
}
.view-tabs {
  display: flex;
  flex-direction: column;
  padding-left: 5px;
  border-right: 1px solid #8a8a8a;
}
.view-tabs button {
  width: 17px;
  border-top: 1px solid #777;
  writing-mode: vertical-rl;
  transform: rotate(180deg);
}
.view-tabs .active {
  background: #fff;
  font-weight: bold;
}
.view-xl {
  height: 96px;
}
.view-l {
  height: 57px;
}
.view-m {
  height: 49px;
}

.editor {
  display: flex;
  flex: 1;
  flex-direction: column;
  min-width: 0;
}
.plan {
  position: relative;
  flex: 162 1 0;
  overflow: hidden;
  border-bottom: 2px solid #bdbdbd;
}
.scene {
  flex: 171 1 0;
  overflow: hidden;
}
.canvas {
  display: block;
  width: 100%;
  height: 100%;
}
.grid line {
  stroke: #e5e5e0;
  stroke-width: 1;
}
.grid .major {
  stroke: #deddd3;
  stroke-width: 2;
}
.axis line {
  stroke: #444;
  stroke-width: 1;
}
.ticks text {
  fill: #1a1a1a;
  font-size: 6px;
  text-anchor: middle;
}
.ticks .zero {
  font-size: 7px;
}
.wall-edge {
  stroke: #4a4a4a;
  stroke-width: 16;
}
.wall-fill {
  stroke: url(#hatch);
  stroke-width: 10;
}
.area {
  fill: #222;
  font: bold 11px "Liberation Serif", serif;
}
.sup {
  font-size: 6px;
}

.btn {
  display: flex;
  align-items: center;
  justify-content: center;
  gap: 5px;
  height: 18px;
  border: 1px solid #c2c2c2;
  background: #e1e1e1;
}
.btn svg {
  width: 14px;
  height: 14px;
}
.icon {
  width: 19px;
}
.sizes {
  width: 50px;
}
.sizes svg {
  width: 11px;
  height: 11px;
}
.wide {
  width: 78px;
}
.inside {
  width: 72px;
}
.off {
  background: #cdcdcd;
}
.group {
  display: flex;
  gap: 1px;
}
.end {
  display: flex;
  gap: 2px;
  margin-left: auto;
}
.plan-tools {
  position: absolute;
  right: 3px;
  bottom: 3px;
  left: 18px;
  display: flex;
  gap: 7px;
}
.scene-tools {
  display: flex;
  gap: 7px;
  padding: 4px 2px 3px 18px;
  border-top: 1px solid #c8c8c8;
}
.scene-tools .end {
  gap: 7px;
}
.check {
  display: flex;
  align-items: center;
  gap: 2px;
  font-size: 7px;
}
.check input {
  width: 8px;
  height: 8px;
  margin: 0;
  border: 1px solid #444;
  background: #fff;
  appearance: none;
}
.check input:checked {
  background: #2a69b2;
}

.side {
  display: flex;
  flex-direction: column;
  width: 185px;
  padding-left: 2px;
}
.side-tabs {
  display: flex;
  align-items: flex-end;
  height: 24px;
}
.side-tabs button {
  width: 58px;
  height: 19px;
  border: 1px solid #e0e0e0;
  border-bottom: 0;
}
.side-tabs .active {
  width: 60px;
  height: 21px;
  border-color: #fff;
  background: #fff;
}
.panel {
  display: flex;
  flex: 1;
  flex-direction: column;
  min-height: 0;
  padding: 3px 2px 4px;
  background: #fff;
}
.head {
  display: flex;
  align-items: center;
  height: 14px;
  margin: 0;
  padding: 0 6px 0 7px;
  background: linear-gradient(#b9d3ea, #d5e6f5);
  font-size: 7px;
  font-weight: bold;
}
.list-mode {
  display: flex;
  align-items: center;
  gap: 5px;
  margin-left: auto;
  font-size: 6px;
  font-weight: normal;
}
.list-mode svg {
  width: 10px;
  height: 10px;
}
.actions {
  display: grid;
  grid-template-columns: repeat(3, 1fr);
  gap: 4px;
  padding: 5px 4px;
}
.actions button {
  display: flex;
  flex-direction: column;
  align-items: center;
  gap: 2px;
  height: 46px;
  padding-top: 3px;
  border: 1px solid #c2c2c2;
  background: #e1e1e1;
}
.actions svg {
  width: 20px;
  height: 20px;
}
.objects {
  display: flex;
  flex: 1;
  min-height: 0;
  margin: 2px 2px 0;
  border: 1px solid #8d8d8d;
}
.objects ul {
  display: grid;
  flex: 1;
  grid-auto-rows: 1fr;
  margin: 0;
  padding: 0 0 2px;
  list-style: none;
}
.objects li {
  display: flex;
  align-items: center;
  gap: 3px;
  padding: 0 5px 0 4px;
  border-bottom: 1px solid #d2d2d2;
}
.objects .child {
  padding-left: 16px;
}
.thumb {
  width: 16px;
  height: 16px;
}
.info {
  display: flex;
  flex-direction: column;
  gap: 2px;
  flex: 1;
}
.info strong {
  font-size: 7px;
  font-weight: normal;
}
.eye,
.eye svg {
  display: block;
  width: 10px;
  height: 7px;
}
.scrollbar {
  display: flex;
  flex-direction: column;
  align-items: center;
  width: 9px;
  background: #f0f0f0;
}
.scrollbar svg {
  width: 7px;
  height: 11px;
  fill: none;
  stroke: #444;
  stroke-width: 2;
}
.track {
  flex: 1;
  width: 100%;
}
.thumb-bar {
  height: 55%;
  background: #cdcdcd;
}
.desktop-edge {
  height: 2px;
  background: linear-gradient(90deg, #eef3c0 28px, #f0f0f0 28px, #f0f0f0 196px, #eef3c0 196px);
}
</style>
